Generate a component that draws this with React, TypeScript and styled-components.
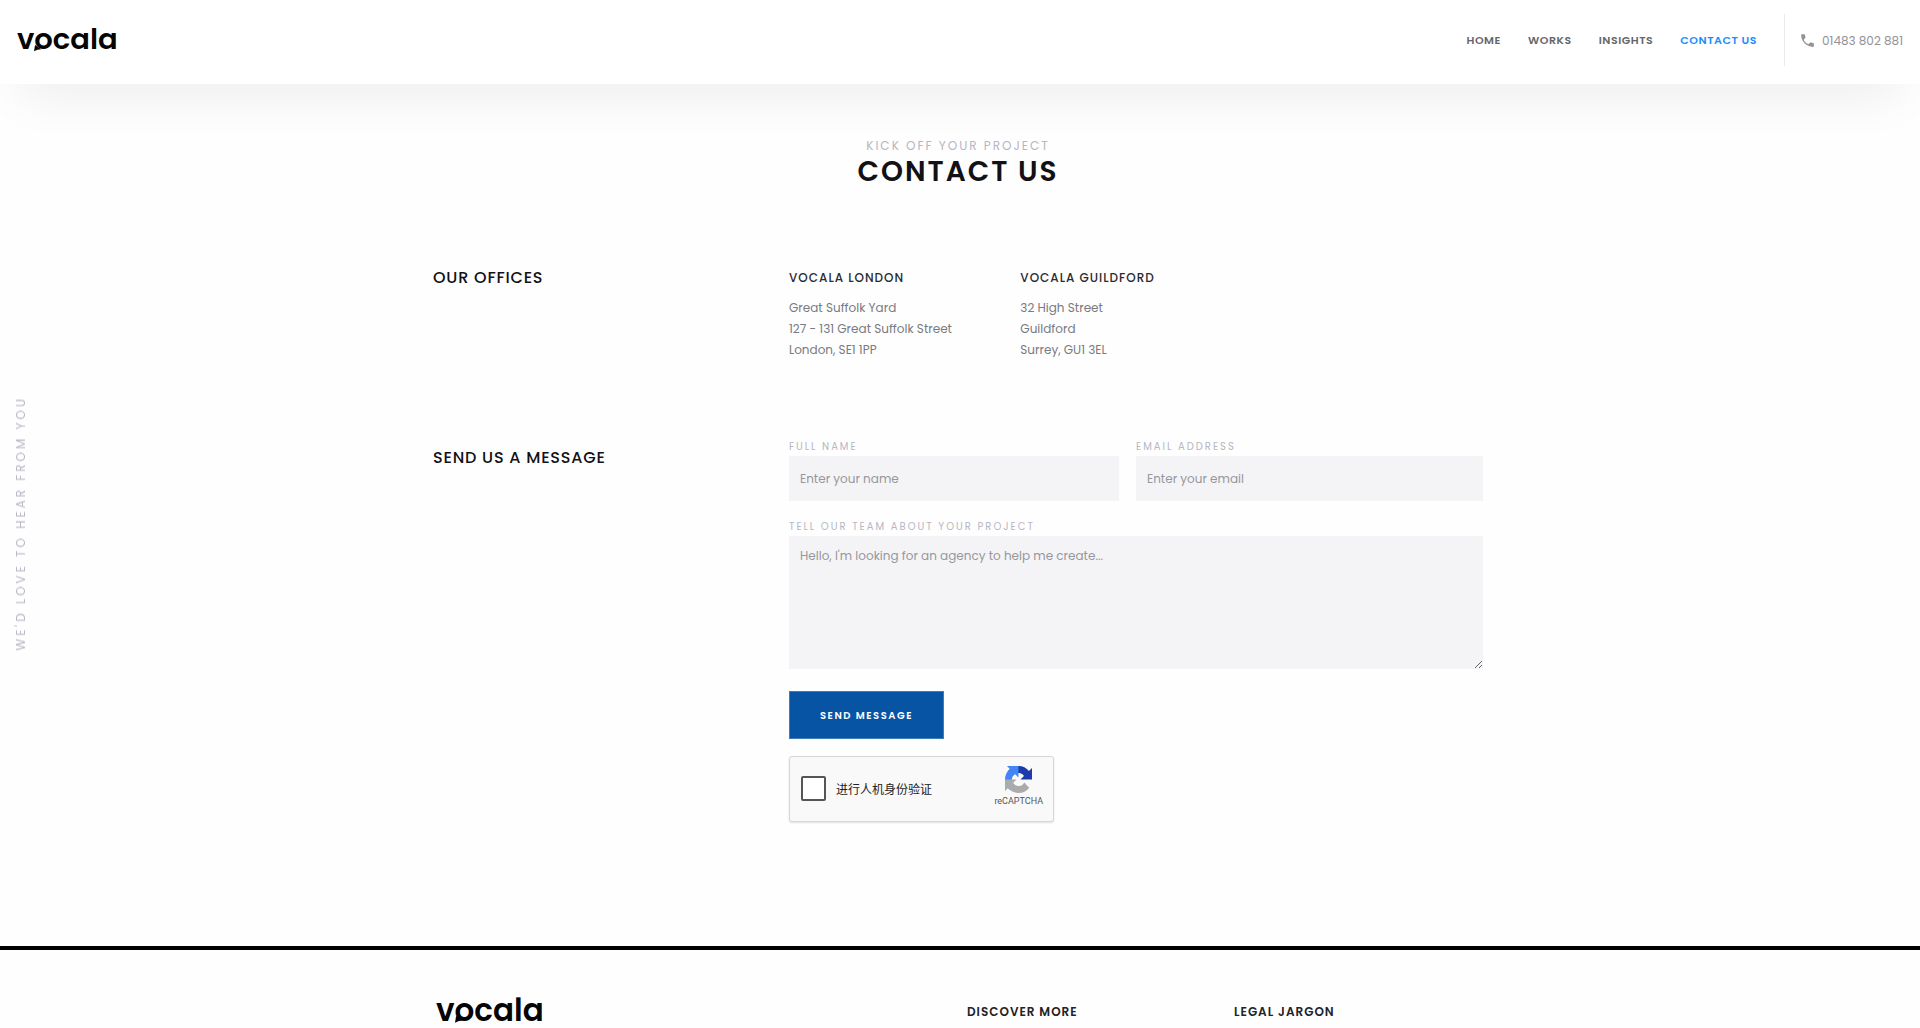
import React from "react";
import styled, { createGlobalStyle } from "styled-components";
import { MdPhone } from "react-icons/md";

const GlobalStyle = createGlobalStyle`
  *, *::before, *::after { box-sizing: border-box; }
  body {
    margin: 0;
    background: #fefefe;
    color: #7a7a80;
    font-family: Poppins, Inter, "Noto Sans CJK SC", sans-serif;
    font-size: 12px;
    line-height: 21px;
  }
  h1, h2, h3, p { margin: 0; }
  a { color: inherit; text-decoration: none; }
`;

const Header = styled.header`
  display: flex;
  align-items: center;
  justify-content: space-between;
  height: 84px;
  padding: 0 17px 4px;
  background: #fff;
  box-shadow: 0 30px 50px -20px rgba(0, 0, 0, 0.08);
`;

const LogoLink = styled.a<{ $size: number }>`
  position: relative;
  display: block;
  padding-bottom: 3px;
  color: #050505;
  font-size: ${(p) => p.$size}px;
  line-height: 40px;
  font-weight: 600;
`;

const BubbleTail = styled.svg`
  position: absolute;
  left: 0.6em;
  bottom: 10px;
  width: 0.25em;
  height: 0.25em;
`;

const Nav = styled.nav`
  display: flex;
  align-items: center;
  gap: 27px;
`;

const NavLink = styled.a<{ $active?: boolean }>`
  color: ${(p) => (p.$active ? "#1a8cff" : "#66666a")};
  font-size: 11px;
  font-weight: 600;
  letter-spacing: 0.05em;
  text-transform: uppercase;
`;

const Phone = styled.a`
  display: flex;
  align-items: center;
  gap: 6px;
  height: 52px;
  padding-left: 14px;
  border-left: 1px solid #ebebee;
  color: #939397;
`;

const Tagline = styled.p`
  position: fixed;
  left: 10px;
  top: 396px;
  writing-mode: vertical-rl;
  transform: rotate(180deg);
  color: #b6b6c4;
  font-size: 12px;
  letter-spacing: 3px;
  text-transform: uppercase;
`;

const Container = styled.div`
  width: 100%;
  max-width: 1054px;
  margin: 0 auto;
  padding-right: 4px;
`;

const Intro = styled.div`
  padding: 51px 0 81px;
  text-align: center;
  text-transform: uppercase;
`;

const Kicker = styled.p`
  color: #b6b6c4;
  font-size: 12px;
  letter-spacing: 2px;
`;

const Title = styled.h1`
  color: #111116;
  font-size: 28px;
  line-height: 32px;
  font-weight: 600;
  letter-spacing: 2px;
`;

const Section = styled.section`
  display: grid;
  grid-template-columns: 356px 1fr;
`;

const SectionTitle = styled.h2<{ $drop?: boolean }>`
  padding-top: ${(p) => (p.$drop ? 11 : 0)}px;
  color: #111116;
  font-size: 16px;
  line-height: 18px;
  font-weight: 500;
  letter-spacing: 0.05em;
  text-transform: uppercase;
`;

const Offices = styled.div`
  display: grid;
  grid-template-columns: repeat(3, 1fr);
  padding-bottom: 78px;
`;

const OfficeName = styled.h3`
  margin-bottom: 10px;
  color: #2a2a30;
  font-size: 12px;
  line-height: 18px;
  font-weight: 500;
  letter-spacing: 1px;
  text-transform: uppercase;
`;

const Address = styled.address`
  font-style: normal;
`;

const Form = styled.form`
  display: grid;
  grid-template-columns: 330px 1fr;
  column-gap: 17px;
  row-gap: 17px;
  padding-bottom: 124px;
`;

const Field = styled.div<{ $wide?: boolean }>`
  display: flex;
  flex-direction: column;
  grid-column: ${(p) => (p.$wide ? "1 / -1" : "auto")};
`;

const Label = styled.label`
  color: #b6b6c4;
  font-size: 10px;
  line-height: 18px;
  letter-spacing: 2px;
  text-transform: uppercase;
`;

const Input = styled.input`
  height: 45px;
  padding: 0 11px;
  border: 0;
  border-radius: 0;
  background: #f4f4f7;
  font: inherit;
  &::placeholder { color: #97979c; opacity: 1; }
`;

const Message = styled(Input).attrs({ as: "textarea" })`
  display: block;
  height: 133px;
  padding: 9px 11px;
  resize: vertical;
`;

const SendButton = styled.button`
  grid-column: 1 / -1;
  justify-self: start;
  height: 48px;
  margin-top: 5px;
  padding: 0 30px;
  border: 1px solid #3f7db8;
  background: #0854a4;
  color: #fff;
  font: inherit;
  font-size: 10px;
  font-weight: 600;
  letter-spacing: 0.15em;
  text-transform: uppercase;
`;

const Captcha = styled.div`
  grid-column: 1 / -1;
  display: flex;
  align-items: center;
  width: 265px;
  height: 66px;
  padding: 0 10px 2px 11px;
  border: 1px solid #d6d6d6;
  border-radius: 3px;
  background: #f9f9f9;
  box-shadow: 0 1px 2px rgba(0, 0, 0, 0.12);
`;

const CaptchaCheck = styled.input`
  appearance: none;
  width: 25px;
  height: 25px;
  margin: 0 10px 0 0;
  border: 2px solid #555;
  border-radius: 2px;
  background: #fff;
`;

const CaptchaLabel = styled.label`
  flex: 1;
  color: #222;
  font-family: "Noto Sans CJK SC", sans-serif;
  font-size: 12px;
`;

const CaptchaBrand = styled.div`
  display: flex;
  flex-direction: column;
  align-items: center;
  color: #555;
  font-family: Roboto, sans-serif;
  font-size: 9px;
  line-height: 17px;
`;

const Footer = styled.footer`
  padding-bottom: 60px;
  border-top: 4px solid #000;
`;

const FooterGrid = styled(Container)`
  display: grid;
  grid-template-columns: 534px 267px 1fr;
  align-items: center;
  padding-top: 40px;
`;

const FooterBrand = styled.div`
  display: flex;
  padding-left: 3px;
`;

const FooterTitle = styled.h2`
  color: #222228;
  font-size: 12px;
  line-height: 18px;
  font-weight: 600;
  letter-spacing: 1px;
  text-transform: uppercase;
`;

function Logo({ size }: { size: number }) {
  return (
    <LogoLink href="#" $size={size}>
      vocala
      <BubbleTail viewBox="0 0 7 7" aria-hidden="true">
        <path d="M0 7 L1 1 L7 5 Q3 5 0 7 Z" fill="#050505" />
      </BubbleTail>
    </LogoLink>
  );
}

function RecaptchaMark() {
  return (
    <svg width="27" height="27" viewBox="0 0 64 64" aria-hidden="true">
      <path fill="#1c3aa9" d="M64 31.955l-.033-1.37V4.687l-7.16 7.16C50.948 4.674 42.033.093 32.05.093c-10.4 0-19.622 4.96-25.458 12.64l11.736 11.86a15.55 15.55 0 0 1 4.754-5.334c2.05-1.6 4.952-2.906 8.968-2.906.485 0 .86.057 1.135.163 4.976.393 9.288 3.14 11.828 7.124l-8.307 8.307L64 31.953" />
      <path fill="#4285f4" d="M31.862.094l-1.37.033H4.594l7.16 7.16C4.58 13.147 0 22.06 0 32.046c0 10.4 4.96 19.622 12.64 25.458L24.5 45.768a15.55 15.55 0 0 1-5.334-4.754c-1.6-2.05-2.906-4.952-2.906-8.968 0-.485.057-.86.163-1.135.393-4.976 3.14-9.288 7.124-11.828l8.307 8.307L31.86.095" />
      <path fill="#ababab" d="M.001 32.045l.033 1.37v25.898l7.16-7.16c5.86 7.173 14.774 11.754 24.76 11.754 10.4 0 19.622-4.96 25.458-12.64l-11.736-11.86a15.55 15.55 0 0 1-4.754 5.334c-2.05 1.6-4.952 2.906-8.968 2.906-.485 0-.86-.057-1.135-.163-4.976-.393-9.288-3.14-11.828-7.124l8.307-8.307c-10.522.04-22.4.066-27.295-.005" />
    </svg>
  );
}

const links = ["Home", "Works", "Insights", "Contact us"];

const offices = [
  { name: "Vocala London", lines: ["Great Suffolk Yard", "127 - 131 Great Suffolk Street", "London, SE1 1PP"] },
  { name: "Vocala Guildford", lines: ["32 High Street", "Guildford", "Surrey, GU1 3EL"] },
];

export default function App() {
  return (
    <>
      <GlobalStyle />
      <Header>
        <Logo size={29} />
        <Nav>
          {links.map((link) => (
            <NavLink key={link} href="#" $active={link === "Contact us"}>
              {link}
            </NavLink>
          ))}
          <Phone href="tel:01483802881">
            <MdPhone size={17} />
            01483 802 881
          </Phone>
        </Nav>
      </Header>
      <Tagline>We'd love to hear from you</Tagline>
      <main>
        <Container>
          <Intro>
            <Kicker>Kick off your project</Kicker>
            <Title>Contact us</Title>
          </Intro>
          <Section>
            <SectionTitle>Our offices</SectionTitle>
            <Offices>
              {offices.map((office) => (
                <div key={office.name}>
                  <OfficeName>{office.name}</OfficeName>
                  <Address>
                    {office.lines.map((line) => (
                      <div key={line}>{line}</div>
                    ))}
                  </Address>
                </div>
              ))}
            </Offices>
          </Section>
          <Section>
            <SectionTitle $drop>Send us a message</SectionTitle>
            <Form onSubmit={(e) => e.preventDefault()}>
              <Field>
                <Label htmlFor="name">Full name</Label>
                <Input id="name" type="text" placeholder="Enter your name" />
              </Field>
              <Field>
                <Label htmlFor="email">Email address</Label>
                <Input id="email" type="email" placeholder="Enter your email" />
              </Field>
              <Field $wide>
                <Label htmlFor="message">Tell our team about your project</Label>
                <Message id="message" placeholder="Hello, I'm looking for an agency to help me create..." />
              </Field>
              <SendButton type="submit">Send message</SendButton>
              <Captcha>
                <CaptchaCheck id="human" type="checkbox" />
                <CaptchaLabel htmlFor="human">进行人机身份验证</CaptchaLabel>
                <CaptchaBrand>
                  <RecaptchaMark />
                  reCAPTCHA
                </CaptchaBrand>
              </Captcha>
            </Form>
          </Section>
        </Container>
      </main>
      <Footer>
        <FooterGrid>
          <FooterBrand>
            <Logo size={31} />
          </FooterBrand>
          <FooterTitle>Discover more</FooterTitle>
          <FooterTitle>Legal jargon</FooterTitle>
        </FooterGrid>
      </Footer>
    </>
  );
}
